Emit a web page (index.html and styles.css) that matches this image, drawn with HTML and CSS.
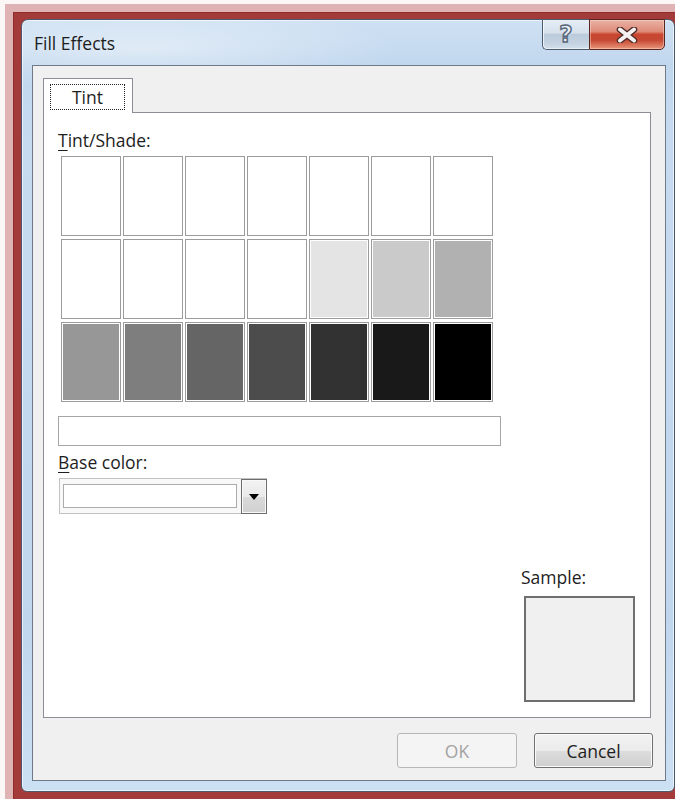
FILE: index.html
```html
<!DOCTYPE html>
<html lang="en">
<head>
<meta charset="utf-8">
<title>Fill Effects</title>
<link rel="stylesheet" href="styles.css">
</head>
<body>
<div class="desk">
  <div class="glow">
    <div class="rim">
      <div class="frame">
        <div class="titlebar">
          <span class="title">Fill Effects</span>
          <div class="caption-btns">
            <div class="cap help"><span class="qmark">?</span></div>
            <div class="cap close">
              <svg width="22" height="16" viewBox="0 0 22 16" aria-hidden="true">
                <path d="M4 2.5 L18 13.5 M18 2.5 L4 13.5" stroke="#4a2a26" stroke-width="6.5" stroke-linecap="round" fill="none"/>
                <path d="M4 2.5 L18 13.5 M18 2.5 L4 13.5" stroke="#f6f1f0" stroke-width="4" stroke-linecap="round" fill="none"/>
              </svg>
            </div>
          </div>
        </div>

        <div class="client">
          <div class="tabs">
            <div class="tab"><span class="focus">Tint</span></div>
          </div>

          <div class="panel">
            <div class="label"><u>T</u>int/Shade:</div>
            <div class="swatches">
              <div class="swatch"><i style="background:#ffffff"></i></div>
              <div class="swatch"><i style="background:#ffffff"></i></div>
              <div class="swatch"><i style="background:#ffffff"></i></div>
              <div class="swatch"><i style="background:#ffffff"></i></div>
              <div class="swatch"><i style="background:#ffffff"></i></div>
              <div class="swatch"><i style="background:#ffffff"></i></div>
              <div class="swatch"><i style="background:#ffffff"></i></div>

              <div class="swatch"><i style="background:#ffffff"></i></div>
              <div class="swatch"><i style="background:#ffffff"></i></div>
              <div class="swatch"><i style="background:#ffffff"></i></div>
              <div class="swatch"><i style="background:#ffffff"></i></div>
              <div class="swatch"><i style="background:#e4e4e4"></i></div>
              <div class="swatch"><i style="background:#cacaca"></i></div>
              <div class="swatch"><i style="background:#b1b1b1"></i></div>

              <div class="swatch"><i style="background:#979797"></i></div>
              <div class="swatch"><i style="background:#7e7e7e"></i></div>
              <div class="swatch"><i style="background:#656565"></i></div>
              <div class="swatch"><i style="background:#4c4c4c"></i></div>
              <div class="swatch"><i style="background:#323232"></i></div>
              <div class="swatch"><i style="background:#191919"></i></div>
              <div class="swatch"><i style="background:#000000"></i></div>
            </div>

            <div class="field"></div>

            <div class="label label-base"><u>B</u>ase color:</div>
            <div class="combo">
              <div class="combo-edit"></div>
              <div class="combo-btn">
                <svg width="10" height="6" viewBox="0 0 10 6" aria-hidden="true"><path d="M0 0 H10 L5 6 Z" fill="#000"/></svg>
              </div>
            </div>

            <div class="sample">
              <div class="sample-label">Sample:</div>
              <div class="sample-box"></div>
            </div>
          </div>

          <div class="actions">
            <button class="btn btn-ok" disabled>OK</button>
            <button class="btn btn-cancel">Cancel</button>
          </div>
        </div>
      </div>
    </div>
  </div>
</div>
</body>
</html>
```

FILE: styles.css
```css
* {
  box-sizing: border-box;
}

html,
body {
  margin: 0;
  padding: 0;
}

body {
  width: 675px;
  height: 799px;
  overflow: hidden;
  background: #fbf7f7;
  font-family: "Open Sans", "Noto Sans", sans-serif;
  font-size: 17.5px;
  line-height: 24px;
  color: #1e1e1e;
}

/* selection glow and border around the dialog */
.desk {
  padding: 4px 0 0 5px;
}

.glow {
  background: #dfb3b3;
  padding: 8px 0 0 8px;
}

.rim {
  background: #a43b3b;
  padding: 7px 0 7px 8px;
  box-shadow: inset 1px 1px 0 #8e2c2c;
}

/* window frame */
.frame {
  width: 654px;
  height: 773px;
  border: 1px solid #4a5a6e;
  border-radius: 7px 7px 6px 6px;
  padding: 0 8px 10px 10px;
  display: flex;
  flex-direction: column;
  background:
    radial-gradient(ellipse 260px 40px at 120px 28px, rgba(255, 255, 255, 0.45), rgba(255, 255, 255, 0) 100%),
    linear-gradient(180deg, #cfe1f3 0, #c1d7ee 44px, #c6dbf0 120px, #c0d6ed 600px, #cce0f3 100%);
  box-shadow: inset 0 0 0 1px rgba(255, 255, 255, 0.6);
}

.titlebar {
  height: 45px;
  display: flex;
  align-items: flex-start;
  justify-content: space-between;
}

.title {
  margin-top: 11px;
  padding-left: 2px;
  font-size: 17.5px;
  color: #1c1c1c;
}

.caption-btns {
  display: flex;
  margin-top: -1px;
  margin-right: 1px;
}

.cap {
  height: 31px;
  border: 1px solid #4c5c70;
  display: flex;
  align-items: center;
  justify-content: center;
}

.help {
  width: 47px;
  border-right: none;
  border-radius: 0 0 0 5px;
  background: linear-gradient(180deg, #e6eef6 0, #d5e0eb 45%, #bccbdb 50%, #c4d2e1 80%, #d4e0ec 100%);
  box-shadow: inset 1px 0 0 rgba(255, 255, 255, 0.7), inset 0 -1px 0 rgba(255, 255, 255, 0.5);
}

.qmark {
  font-family: "DejaVu Sans", sans-serif;
  font-weight: bold;
  font-size: 23px;
  line-height: 22px;
  color: #e8edf2;
  -webkit-text-stroke: 1.4px #56677a;
  margin-top: -2px;
}

.close {
  width: 76px;
  border-radius: 0 0 5px 0;
  border-color: #5a2620;
  background: linear-gradient(180deg, #eab2a6 0, #de8a78 40%, #c9452f 50%, #c64a34 70%, #de7d62 90%, #e89a80 100%);
  box-shadow: inset 0 0 0 1px rgba(255, 220, 210, 0.45);
}

/* dialog face */
.client {
  height: 716px;
  border: 1px solid #6e7a88;
  background: #f0f0f0;
  padding: 12px 14px 0 10px;
  display: flex;
  flex-direction: column;
}

.tabs {
  display: flex;
  height: 34px;
  position: relative;
  z-index: 1;
}

.tab {
  width: 90px;
  height: 35px;
  border: 1px solid #8b8e96;
  border-bottom: none;
  background: #fff;
  padding: 5px 7px 0 6px;
}

.focus {
  display: block;
  height: 26px;
  border: 1px dotted #222;
  text-align: center;
  line-height: 24px;
}

.panel {
  height: 606px;
  border: 1px solid #8b8e96;
  background: #fff;
  padding: 15px 15px 15px 14px;
  display: flex;
  flex-direction: column;
}

.label {
  line-height: 24px;
  color: #1e1e1e;
}

.label u {
  text-decoration-thickness: 1px;
  text-underline-offset: 3px;
}

.swatches {
  margin: 4px 0 0 3px;
  display: grid;
  grid-template-columns: repeat(7, 60px);
  grid-template-rows: repeat(3, 80px);
  column-gap: 2px;
  row-gap: 3px;
}

.swatch {
  border: 1px solid #9c9c9c;
  padding: 1px;
  background: #fff;
  display: flex;
}

.swatch i {
  flex: 1;
  display: block;
}

.field {
  width: 443px;
  height: 30px;
  margin-top: 14px;
  border: 1px solid #a6a6a6;
  background: #fff;
}

.label-base {
  margin-top: 4px;
}

.combo {
  width: 208px;
  height: 36px;
  margin: 4px 0 0 1px;
  border: 1px solid #c2c2c2;
  background: #f8f8f8;
  display: flex;
}

.combo-edit {
  flex: 1;
  margin: 5px 4px 5px 3px;
  border: 1px solid #ababab;
  background: #fff;
}

.combo-btn {
  width: 26px;
  margin: 0 -1px -1px 0;
  border: 1px solid #6d6d6d;
  background: linear-gradient(180deg, #f3f3f3 0, #e9e9e9 50%, #dadada 51%, #d0d0d0 100%);
  box-shadow: inset 0 0 0 1px #f8f8f8;
  display: flex;
  align-items: center;
  justify-content: center;
}

.sample {
  margin-top: auto;
  align-self: flex-end;
  display: flex;
  flex-direction: column;
}

.sample-label {
  margin-left: -3px;
}

.sample-box {
  width: 111px;
  height: 106px;
  margin-top: 7px;
  border: 2px solid #6f6f6f;
  background: #f0f0f0;
}

.actions {
  display: flex;
  justify-content: flex-end;
  gap: 17px;
  margin: 15px -2px 0 0;
}

.btn {
  height: 35px;
  font-family: inherit;
  font-size: 17.5px;
  line-height: 24px;
  border-radius: 3px;
  padding: 0;
}

.btn-ok {
  width: 120px;
  border: 1px solid #b4b8bb;
  background: #f4f4f4;
  color: #a3a3a3;
}

.btn-cancel {
  width: 119px;
  border: 1px solid #707070;
  color: #1e1e1e;
  background: linear-gradient(180deg, #f2f2f2 0, #ebebeb 50%, #dddddd 51%, #cfcfcf 100%);
  box-shadow: inset 0 0 0 1px #fbfbfb;
}
```
